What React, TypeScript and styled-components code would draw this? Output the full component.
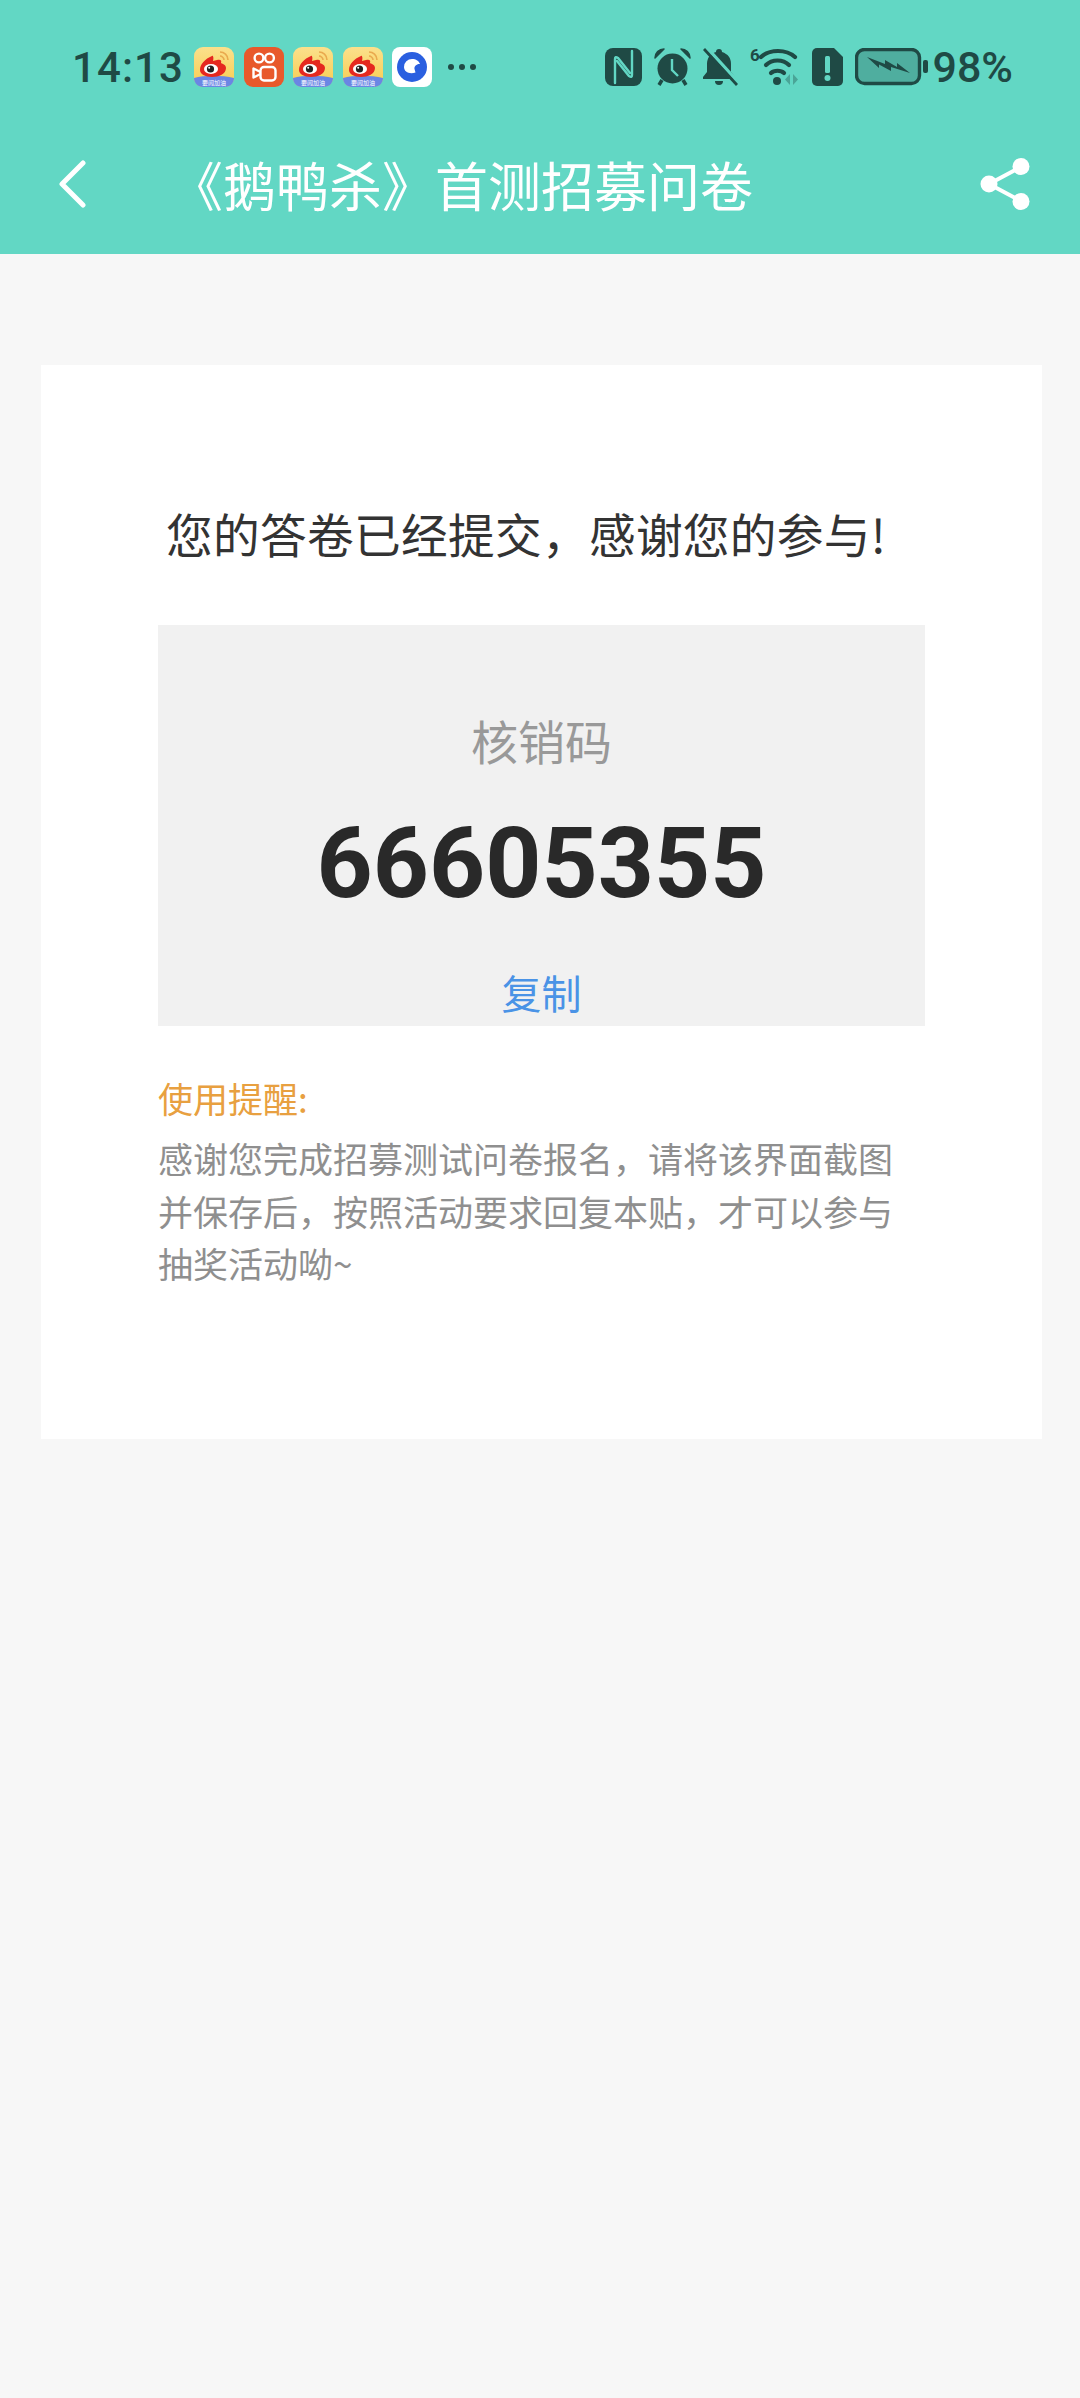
import React from "react"
import styled, { createGlobalStyle } from "styled-components"

const cjk = `"Noto Sans CJK SC", "Noto Sans", sans-serif`
const ink = "#1f4a45"
const teal = "#62d7c4"

const GlobalStyle = createGlobalStyle`
  html, body {
    margin: 0;
    padding: 0;
    background: #f7f7f7;
  }
  * {
    box-sizing: border-box;
  }
`

const Page = styled.div`
  width: 1080px;
  height: 2398px;
  overflow: hidden;
  background: #f7f7f7;
  font-family: ${cjk};
`

const TopArea = styled.header`
  background: ${teal};
  height: 254px;
`

const StatusBar = styled.div`
  height: 114px;
  padding: 47px 67px 0 72px;
  display: flex;
  align-items: flex-start;
  justify-content: space-between;
`

const StatusGroup = styled.div`
  display: flex;
  align-items: center;
  height: 40px;
`

const Time = styled.span`
  font-family: Roboto, sans-serif;
  font-weight: 500;
  font-size: 42px;
  letter-spacing: 1.1px;
  color: ${ink};
  margin-right: 10px;
`

const AppIcons = styled.div`
  display: flex;
  align-items: center;
  gap: 9.5px;
`

const More = styled.div`
  display: flex;
  gap: 5px;
  margin-left: 16px;
`

const Dot = styled.span`
  width: 6px;
  height: 6px;
  border-radius: 50%;
  background: ${ink};
`

const Battery = styled.span`
  font-family: Roboto, sans-serif;
  font-weight: 500;
  font-size: 43px;
  color: ${ink};
  margin-left: 4px;
`

const Icons = styled.div`
  display: flex;
  align-items: center;
  gap: 12px;
`

const WifiSvg = styled.svg`
  margin-top: -4px;
`

const NavBar = styled.nav`
  height: 140px;
  padding: 0 50px 0 58px;
  display: flex;
  align-items: center;
`

const NavTitle = styled.h1`
  flex: 1;
  margin: 0 0 0 84px;
  font-size: 53px;
  font-weight: 400;
  line-height: 70px;
  color: #fff;
  white-space: nowrap;
`

const Card = styled.main`
  margin: 111px 38px 0 41px;
  padding: 138px 117px 149px 117px;
  background: #fff;
`

const Heading = styled.h2`
  margin: 0 0 62px;
  padding-left: 8px;
  font-size: 46.7px;
  font-weight: 400;
  line-height: 60px;
  letter-spacing: 0.3px;
  color: #333;
  white-space: nowrap;
`

const CodeBox = styled.section`
  height: 401px;
  padding-top: 85px;
  background: #f1f1f1;
  display: flex;
  flex-direction: column;
  align-items: center;
`

const CodeLabel = styled.div`
  font-size: 47px;
  line-height: 60px;
  color: #999;
`

const CodeValue = styled.div`
  margin-top: 44px;
  font-family: Roboto, sans-serif;
  font-size: 98px;
  font-weight: 700;
  line-height: 100px;
  color: #292929;
`

const CopyLink = styled.a`
  margin-top: 48px;
  font-size: 40px;
  line-height: 60px;
  color: #4a93e6;
`

const NoteTitle = styled.div`
  margin-top: 46px;
  font-size: 35px;
  line-height: 52px;
  color: #e8a040;
`

const NoteBody = styled.p`
  margin: 8px 0 0;
  font-size: 35px;
  line-height: 52.5px;
  color: #8f8f8f;
`

const WeiboIcon = () => (
  <svg width="40" height="40" viewBox="0 0 40 40">
    <defs>
      <linearGradient id="wb" x1="0" y1="0" x2="0" y2="1">
        <stop offset="0" stopColor="#fbe08c" />
        <stop offset="1" stopColor="#f8cc50" />
      </linearGradient>
    </defs>
    <rect width="40" height="40" rx="9" fill="url(#wb)" />
    <path d="M0 31c10-3 28-3 40 0v0c0 5-4 9-9 9H9c-5 0-9-4-9-9z" fill="#6a86e4" />
    <text x="20" y="38" fontSize="6" fill="#fff" textAnchor="middle" fontFamily={cjk}>
      要闻加油
    </text>
    <path d="M26 5c4 0 8 3 8 8M26 9c2 0 4 2 4 4" fill="none" stroke="#e9a94e" strokeWidth="1.6" />
    <path d="M18 9c-7 3-12 8-12 14 0 4 5 7 12 7s14-3 14-9c0-3-3-4-5-5 1-3-1-4-4-3l-4 1c1-3 0-6-1-5z" fill="#e5281f" />
    <ellipse cx="17" cy="22" rx="7" ry="5" fill="#fff" />
    <circle cx="16.500" cy="22" r="3.600" fill="#222" />
    <circle cx="15.200" cy="20.800" r="1" fill="#fff" />
  </svg>
)

const KuaishouIcon = () => (
  <svg width="40" height="40" viewBox="0 0 40 40">
    <rect width="40" height="40" rx="9" fill="#e8592b" />
    <g fill="none" stroke="#fff" strokeWidth="2.4">
      <circle cx="15" cy="11" r="4.4" />
      <circle cx="25.500" cy="11" r="4.400" />
      <rect x="16.500" y="20" width="15" height="13.500" rx="3.500" />
      <path d="M16.500 25l-7-3.500v9l7-3.500" strokeLinejoin="round" />
    </g>
  </svg>
)

const BrowserIcon = () => (
  <svg width="40" height="40" viewBox="0 0 40 40">
    <rect width="40" height="40" rx="8" fill="#fff" />
    <circle cx="20" cy="20" r="15" fill="#2a5fe0" />
    <path d="M12 20a8 8 0 0 1 8-8c4 0 7 2 8 5-3-.5-6 2-5.500 5l1 3.500c-6 2-11.500-.5-11.500-5.500z" fill="#fff" />
  </svg>
)

const NfcIcon = () => (
  <svg width="37" height="38" viewBox="0 0 37 38">
    <rect width="37" height="38" rx="8" fill={ink} />
    <g fill="none" stroke={teal} strokeWidth="2.400" strokeLinecap="round">
      <path d="M10 35V11q0-3 3-1l12 15" />
      <path d="M27 3v24q0 3-3 1L12 13" />
    </g>
  </svg>
)

const AlarmIcon = () => (
  <svg width="37" height="38" viewBox="0 0 37 38">
    <circle cx="18.500" cy="20.500" r="15" fill={ink} />
    <path d="M18 11v11l6 6" fill="none" stroke={teal} strokeWidth="2.400" />
    <path d="M1 10c0-5 4-9 9-9zM36 10c0-5-4-9-9-9z" fill={ink} stroke={ink} strokeWidth="1.500" strokeLinejoin="round" />
    <path d="M8 32l-3 5M29 32l3 5" stroke={ink} strokeWidth="3.500" />
  </svg>
)

const MutedBellIcon = () => (
  <svg width="35" height="38" viewBox="0 0 35 38">
    <path d="M16 1a3 3 0 0 1 3 3c6 2 9 6 9 12v8l4 5v2H0v-2l4-5v-8c0-6 3-10 9-12a3 3 0 0 1 3-3z" fill={ink} />
    <path d="M12 33h8a4 4 0 0 1-8 0z" fill={ink} />
    <path d="M5 1l30 33" stroke={teal} strokeWidth="3.500" />
    <path d="M1 1l33 36" stroke={ink} strokeWidth="2.800" />
  </svg>
)

const WifiIcon = () => (
  <WifiSvg width="50" height="42" viewBox="0 -4 50 42">
    <text x="0" y="13" fontSize="17" fontWeight="700" fill={ink} fontFamily="Roboto, sans-serif">
      6
    </text>
    <g fill="none" stroke={ink} strokeWidth="4.200" strokeLinecap="round">
      <path d="M11 9c9-8 25-8 34 0" />
      <path d="M16 17c6-6 17-6 23 0" />
      <path d="M21 25c3-3 10-3 13 0" />
    </g>
    <circle cx="27" cy="33" r="4" fill={ink} />
    <path d="M40 26v11l-5-5.500zM43 26v11l5-5.500z" fill="#4aa597" />
  </WifiSvg>
)

const SimIcon = () => (
  <svg width="31" height="38" viewBox="0 0 31 38">
    <path d="M5 0h17l9 9v24a5 5 0 0 1-5 5H5a5 5 0 0 1-5-5V5a5 5 0 0 1 5-5z" fill={ink} />
    <rect x="13" y="8" width="5" height="17" rx="1.500" fill={teal} />
    <circle cx="15.500" cy="30" r="3" fill={teal} />
  </svg>
)

const BatteryIcon = () => (
  <svg width="73" height="38" viewBox="0 0 73 38">
    <rect x="1.500" y="1.500" width="63" height="34" rx="8" fill="#4fae9f" stroke={ink} strokeWidth="3.400" />
    <rect x="68" y="12" width="5" height="13" rx="2" fill={ink} />
    <path d="M12 9l18 7v-4l12 7v-4l13 10-19-6v4l-12-6.500v3.500z" fill={ink} />
  </svg>
)

const BackIcon = () => (
  <svg width="28" height="48" viewBox="0 0 28 48">
    <path d="M25 3L4 24l21 21" fill="none" stroke="#fff" strokeWidth="5" strokeLinecap="round" strokeLinejoin="round" />
  </svg>
)

const ShareIcon = () => (
  <svg width="50" height="54" viewBox="0 0 50 54">
    <path d="M41 10L9 27l32 17" fill="none" stroke="#fff" strokeWidth="4" />
    <circle cx="41" cy="9.500" r="8.500" fill="#fff" />
    <circle cx="9" cy="27" r="8.500" fill="#fff" />
    <circle cx="41" cy="44.500" r="8.500" fill="#fff" />
  </svg>
)

const App: React.FC = () => {
  return (
    <Page>
      <GlobalStyle />
      <TopArea>
        <StatusBar>
          <StatusGroup>
            <Time>14:13</Time>
            <AppIcons>
              <WeiboIcon />
              <KuaishouIcon />
              <WeiboIcon />
              <WeiboIcon />
              <BrowserIcon />
            </AppIcons>
            <More>
              <Dot />
              <Dot />
              <Dot />
            </More>
          </StatusGroup>
          <StatusGroup>
            <Icons>
              <NfcIcon />
              <AlarmIcon />
              <MutedBellIcon />
              <WifiIcon />
              <SimIcon />
              <BatteryIcon />
            </Icons>
            <Battery>98%</Battery>
          </StatusGroup>
        </StatusBar>
        <NavBar>
          <BackIcon />
          <NavTitle>《鹅鸭杀》首测招募问卷</NavTitle>
          <ShareIcon />
        </NavBar>
      </TopArea>
      <Card>
        <Heading>您的答卷已经提交，感谢您的参与!</Heading>
        <CodeBox>
          <CodeLabel>核销码</CodeLabel>
          <CodeValue>66605355</CodeValue>
          <CopyLink>复制</CopyLink>
        </CodeBox>
        <NoteTitle>使用提醒:</NoteTitle>
        <NoteBody>感谢您完成招募测试问卷报名，请将该界面截图并保存后，按照活动要求回复本贴，才可以参与抽奖活动呦~</NoteBody>
      </Card>
    </Page>
  )
}

export default App
